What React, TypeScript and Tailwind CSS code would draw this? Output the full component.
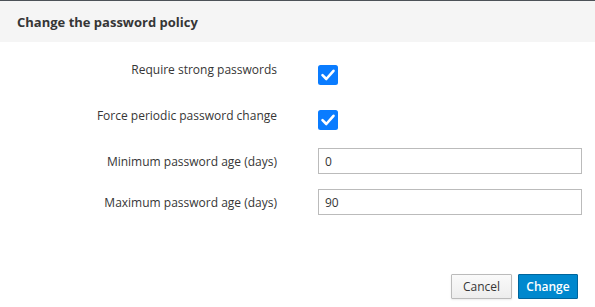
import React from "react";

function Check() {
  return (
    <svg width="20" height="20" viewBox="0 0 20 20">
      <rect x="0" y="0" width="20" height="20" rx="2.5" fill="#0a7cff" />
      <path d="M4.5 10.2 L8.3 14 L15.5 5.8" fill="none" stroke="#fff" strokeWidth="2.6" strokeLinecap="round" strokeLinejoin="round" />
    </svg>
  );
}

export default function App() {
  const font = { fontFamily: '"Open Sans", "Liberation Sans", sans-serif' };
  return (
    <div style={font} className="w-[595px] h-[307px] bg-white flex flex-col border-t border-[#4d5258] text-[12px] text-[#363636]">
      <div className="h-[41px] bg-[#f5f5f5] px-[17px] flex items-center shrink-0">
        <h1 className="text-[13px] font-bold text-[#363636] leading-[18px]">Change the password policy</h1>
      </div>
      <div className="flex flex-col">
        <div className="flex mt-[19px] h-[24px]">
          <div className="w-[277px] text-right leading-[18px]">Require strong passwords</div>
          <div className="ml-[41px] mt-[4px]"><Check /></div>
        </div>
        <div className="flex mt-[22px] h-[23px]">
          <div className="w-[277px] text-right leading-[18px]">Force periodic password change</div>
          <div className="ml-[41px] mt-[3px]"><Check /></div>
        </div>
        <div className="flex mt-[18px] h-[26px]">
          <div className="w-[277px] text-right leading-[18px] pt-[5px]">Minimum password age (days)</div>
          <input readOnly value="0" className="ml-[41px] w-[264px] h-[26px] border border-[#bbbbbb] px-[6px] text-[12px] text-[#363636] outline-none" style={font} />
        </div>
        <div className="flex mt-[15px] h-[26px]">
          <div className="w-[277px] text-right leading-[18px] pt-[5px]">Maximum password age (days)</div>
          <input readOnly value="90" className="ml-[41px] w-[264px] h-[26px] border border-[#bbbbbb] px-[6px] text-[12px] text-[#363636] outline-none" style={font} />
        </div>
      </div>
      <div className="flex justify-end gap-[6px] pr-[17px] mt-[59px]">
        <button className="w-[61px] h-[25px] border border-[#bbbbbb] bg-gradient-to-b from-[#fafafa] to-[#ededed] text-[12px] text-[#363636] rounded-[1px] shadow-[0_1px_2px_rgba(0,0,0,0.08)]" style={font}>Cancel</button>
        <button className="w-[60px] h-[25px] border border-[#00659c] bg-[#0088ce] text-[12px] font-semibold text-white rounded-[1px]" style={font}>Change</button>
      </div>
    </div>
  );
}
